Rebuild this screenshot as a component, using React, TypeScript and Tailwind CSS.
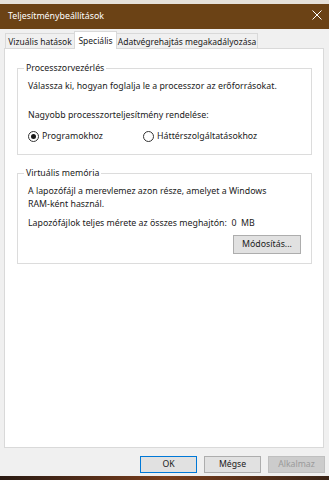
import React from 'react';

const font = { fontFamily: '"Noto Sans", "Liberation Sans", sans-serif' };

const Radio = ({ checked, label }: { checked?: boolean; label: string }) => (
    <label className="flex items-center">
        <span className="flex h-[11px] w-[11px] shrink-0 items-center justify-center rounded-full border border-[#333333] bg-white">
            {checked && <span className="h-[5px] w-[5px] rounded-full bg-[#1a1a1a]" />}
        </span>
        <span className="ml-[3px]">{label}</span>
    </label>
);

const DialogButton = ({
    children,
    variant = 'normal',
}: {
    children: React.ReactNode;
    variant?: 'normal' | 'default' | 'disabled';
}) => {
    const styles = {
        normal: 'border-[#adadad] bg-[#e1e1e1] text-[#1a1a1a]',
        default: 'border-[#0078d7] bg-[#e1e1e1] text-[#1a1a1a]',
        disabled: 'border-[#bfbfbf] bg-[#cccccc] text-[#9a9a9a]',
    };
    return (
        <div
            className={`flex h-[17px] w-[57px] items-center justify-center border text-[8.7px] ${styles[variant]}`}
        >
            {children}
        </div>
    );
};

export default function App() {
    return (
        <div
            className="flex h-[480px] w-[329px] flex-col overflow-hidden whitespace-nowrap bg-[#f0f0f0] text-[8.8px] leading-[15px] text-[#1a1a1a]"
            style={font}
        >
            {/* desktop strip */}
            <div className="h-[4px] bg-[#e6e1da]" />

            {/* Title bar */}
            <div className="flex h-[25px] items-center justify-between bg-[#6b4215] pl-[8px] pr-[7px] text-white">
                <span className="text-[8.8px]">Teljesítménybeállítások</span>
                <svg width="10" height="10" viewBox="0 0 10 10" className="mb-[3px]">
                    <path d="M0.5 0.5 L9.5 9.5 M9.5 0.5 L0.5 9.5" stroke="#ffffff" strokeWidth="1" />
                </svg>
            </div>

            <div className="flex flex-1 flex-col">
                {/* Tabs */}
                <div className="-mb-px flex items-end pl-[5px] pt-[2px] text-[8.5px]">
                    <div className="flex h-[16px] w-[69px] items-center justify-center border-l border-t border-[#d9d9d9] bg-[#f0f0f0]">
                        Vizuális hatások
                    </div>
                    <div className="relative z-10 flex h-[18px] w-[43px] items-start justify-center border-l border-r border-t border-[#d9d9d9] bg-white pt-[1px]">
                        Speciális
                    </div>
                    <div className="flex h-[16px] w-[141px] items-center justify-center border-r border-t border-[#d9d9d9] bg-[#f0f0f0]">
                        Adatvégrehajtás megakadályozása
                    </div>
                </div>

                {/* Tab panel */}
                <div className="ml-[4px] mr-[5px] flex-1 border border-[#d9d9d9] bg-white pl-[12px] pr-[11px] pt-[12px]">
                    <fieldset className="border border-[#dcdcdc] px-[10px] pb-[10px]">
                        <legend className="-ml-[4px] px-[2px]">Processzorvezérlés</legend>
                        <p className="mt-[3px]">
                            Válassza ki, hogyan foglalja le a processzor az erőforrásokat.
                        </p>
                        <p className="mt-[14px]">Nagyobb processzorteljesítmény rendelése:</p>
                        <div className="mt-[6px] grid grid-cols-[115px_1fr] items-center">
                            <Radio checked label="Programokhoz" />
                            <Radio label="Háttérszolgáltatásokhoz" />
                        </div>
                    </fieldset>

                    <fieldset className="mt-[11px] border border-[#dcdcdc] px-[10px] pb-[9px]">
                        <legend className="-ml-[4px] px-[2px]">Virtuális memória</legend>
                        <p className="mt-[4px] leading-[13px]">
                            A lapozófájl a merevlemez azon része, amelyet a Windows
                            <br />
                            RAM-ként használ.
                        </p>
                        <p className="mt-[5px]">
                            Lapozófájlok teljes mérete az összes meghajtón:&nbsp; 0&nbsp; MB
                        </p>
                        <div className="mt-[4px] flex justify-end">
                            <div className="flex h-[19px] w-[68px] items-center justify-center border border-[#adadad] bg-[#e1e1e1]">
                                Módosítás...
                            </div>
                        </div>
                    </fieldset>
                </div>

                {/* Dialog buttons */}
                <div className="flex justify-end gap-[7px] pb-[3px] pr-[4px] pt-[8px]">
                    <DialogButton variant="default">OK</DialogButton>
                    <DialogButton>Mégse</DialogButton>
                    <DialogButton variant="disabled">Alkalmaz</DialogButton>
                </div>
            </div>

            {/* taskbar strip */}
            <div className="h-[4px] bg-gradient-to-r from-[#2a1a12] via-[#7a3e1c] to-[#3a2416]" />
        </div>
    );
}
